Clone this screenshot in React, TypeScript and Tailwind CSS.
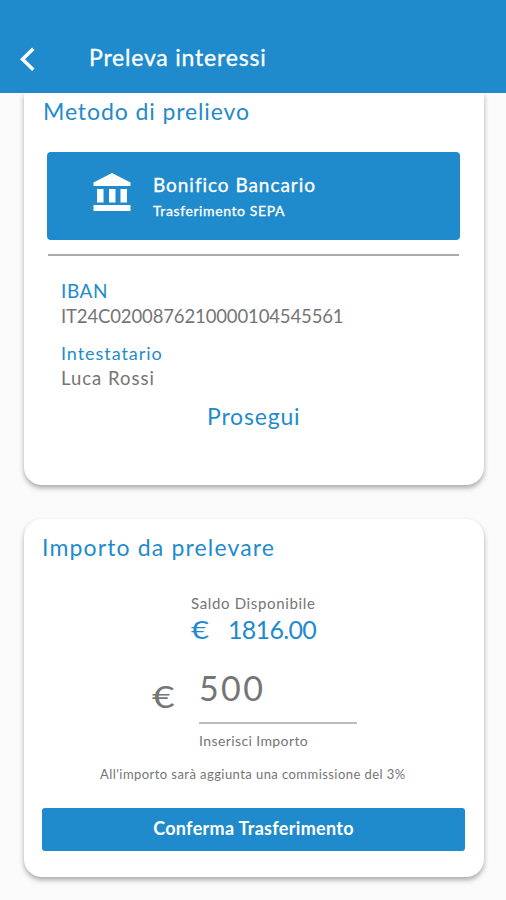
import { useState } from "react";

export default function App() {
  return (
    <div className="h-[900px] w-full overflow-hidden bg-[#fafafa] font-['Lato',sans-serif] text-[#757575]">
      <Header title="Preleva interessi" />
      <main className="flex flex-col gap-[34px] pl-6 pr-[22px]">
        <MethodCard />
        <AmountCard />
      </main>
    </div>
  );
}

const Header = ({ title }: { title: string }) => {
  return (
    <header className="flex h-[93px] items-start bg-[#1f8bcc] pl-5 pt-[43px] text-white">
      <button className="mt-[3px] h-[26px] w-4">
        <svg width="16" height="26" viewBox="0 0 16 26" fill="none">
          <path d="M13.300 2.700L2.500 13.200L13.300 23.700" stroke="currentColor" strokeWidth="3.500" />
        </svg>
      </button>
      <h1 className="ml-[53px] whitespace-nowrap text-[23px] leading-[28px] tracking-[0.8px] [-webkit-text-stroke:0.3px]">
        {title}
      </h1>
    </header>
  );
};

const MethodCard = () => {
  return (
    <section className="h-[392px] rounded-b-[18px] bg-white px-[19px] pt-1 shadow-[0_3px_5px_rgba(0,0,0,0.32)]">
      <h2 className="whitespace-nowrap text-[23px] leading-[28px] tracking-[0.9px] text-[#1f8bcc]">
        Metodo di prelievo
      </h2>
      <button className="ml-1 mt-[27px] flex h-[88px] w-[413px] items-start rounded-[4px] bg-[#1f8bcc] text-left text-white">
        <BankIcon />
        <div className="ml-[22px] mt-[20px] whitespace-nowrap [-webkit-text-stroke:0.3px]">
          <p className="text-[19px] leading-[26px] tracking-[0.95px]">Bonifico Bancario</p>
          <p className="mt-px text-[14px] leading-[24px] tracking-[0.6px]">Trasferimento SEPA</p>
        </div>
      </button>
      <div className="ml-[5px] mt-[14px] h-[2px] w-[411px] bg-[#aaaaaa]" />
      <div className="ml-[18px] mt-[23px] whitespace-nowrap leading-[24px]">
        <p className="text-[19px] tracking-[0.6px] text-[#1f8bcc]">IBAN</p>
        <p className="mt-px text-[18.500px] tracking-[-0.13px]">IT24C0200876210000104545561</p>
        <p className="mt-[13px] text-[18px] tracking-[0.95px] text-[#1f8bcc]">Intestatario</p>
        <p className="mt-px text-[18.500px] tracking-[1px]">Luca Rossi</p>
      </div>
      <button className="ml-[164px] mt-[12px] block text-[23px] leading-[28px] tracking-[0.8px] text-[#1f8bcc]">
        Prosegui
      </button>
    </section>
  );
};

const AmountCard = () => {
  const [amount, setAmount] = useState("500");

  return (
    <section className="h-[358px] rounded-[18px] bg-white pl-[18px] pr-[19px] pt-[14px] shadow-[0_3px_5px_rgba(0,0,0,0.32)]">
      <h2 className="whitespace-nowrap text-[23px] leading-[28px] tracking-[1.15px] text-[#1f8bcc]">
        Importo da prelevare
      </h2>
      <div className="ml-[149px] mt-8 whitespace-nowrap">
        <p className="text-[15px] leading-[20px] tracking-[0.65px]">Saldo Disponibile</p>
        <p className="mt-px flex text-[25px] leading-[30px] text-[#1f8bcc]">
          <span className="w-[37px] origin-left scale-x-125">€</span>
          <span className="tracking-[-0.7px]">1816.00</span>
        </p>
      </div>
      <div className="mt-[23px] flex items-start">
        <span className="ml-[110px] mt-[11px] w-[47px] origin-left scale-x-[1.3] text-[30px] leading-[36px]">€</span>
        <label className="w-[158px] whitespace-nowrap">
          <input
            className="block h-[57px] w-full border-b-2 border-[#bdbdbd] bg-transparent pb-[15px] text-[34px] leading-[40px] tracking-[2.4px] outline-none"
            value={amount}
            onChange={(e) => setAmount(e.target.value)}
          />
          <span className="mt-[7px] block text-[14px] leading-[20px] tracking-[0.4px]">Inserisci Importo</span>
        </label>
      </div>
      <p className="ml-[58px] mt-[14px] whitespace-nowrap text-[13px] leading-[18px] tracking-[0.44px]">
        All'importo sarà aggiunta una commissione del 3%
      </p>
      <button className="mt-[25px] block h-[43px] w-full rounded-[3px] bg-[#1f8bcc] pb-[3px] text-[18px] font-bold leading-[40px] tracking-[0.3px] text-white">
        Conferma Trasferimento
      </button>
    </section>
  );
};

const BankIcon = () => {
  return (
    <svg className="ml-[46px] mt-[21px]" width="38" height="38" viewBox="0 0 38 38" fill="currentColor">
      <path d="M19 0L37.500 9.500V13H0.500V9.500Z" />
      <path d="M4 16h6.500v13.500H4zM16 16h6.500v13.500H16zM27.500 16H34v13.500h-6.500zM0.500 32h37v6h-37z" />
    </svg>
  );
};
